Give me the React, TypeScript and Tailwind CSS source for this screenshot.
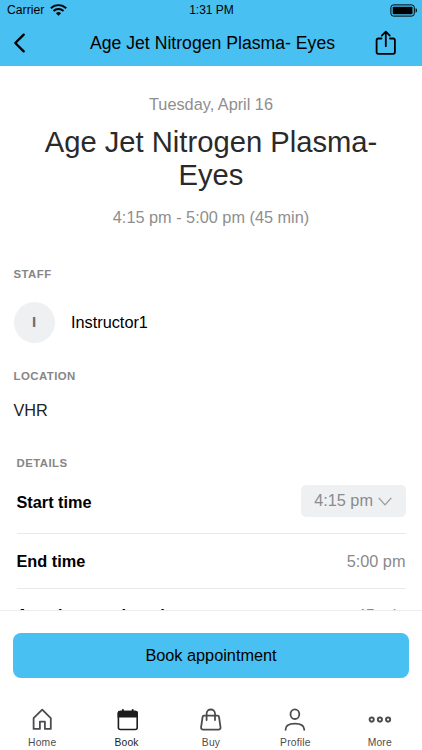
import React from 'react';

interface DetailRowProps {
  label: string;
  value: string;
  className?: string;
}

const DetailRow: React.FC<DetailRowProps> = ({ label, value, className = 'h-[55px]' }) => (
  <div className={`flex shrink-0 items-center justify-between border-b border-[#e9e9e9] text-[16.3px] ${className}`}>
    <span className="font-bold text-black">{label}</span>
    <span className="text-[#8a8a8a]">{value}</span>
  </div>
);

const SectionTitle: React.FC<{ children: React.ReactNode }> = ({ children }) => (
  <h2 className="text-[11.4px] leading-4 font-bold tracking-[0.45px] text-[#868686]">{children}</h2>
);

const StatusBar = () => (
  <div className="flex h-[19px] items-center justify-between pt-px pl-[7px] pr-1 text-[12px] leading-[18px]">
    <div className="flex w-[70px] items-center gap-[6px]">
      <span className="text-[12.2px]">Carrier</span>
      <svg width="17" height="12" viewBox="0 0 17 12" fill="none" stroke="black" strokeWidth="1.9">
        <path d="M0.8 4.3a11 11 0 0 1 15.4 0" />
        <path d="M3.5 7a7.2 7.2 0 0 1 10 0" />
        <path d="M8.5 11.8 5.9 9.2a3.8 3.8 0 0 1 5.2 0Z" fill="black" stroke="none" />
      </svg>
    </div>
    <span className="-ml-0.5">1:31 PM</span>
    <div className="flex w-[70px] justify-end">
      <svg width="28" height="13" viewBox="0 0 28 13">
        <rect x="0.9" y="0.9" width="23.4" height="11.2" rx="2.6" fill="none" stroke="black" strokeWidth="1" />
        <rect x="2.7" y="2.7" width="19.8" height="7.6" rx="0.8" />
        <path d="M25.6 4.3c1.9.6 1.9 3.8 0 4.4z" />
      </svg>
    </div>
  </div>
);

const HomeIcon = () => (
  <svg width="24" height="26" viewBox="0 0 24 26" fill="none" stroke="#4c4c50" strokeWidth="1.8" strokeLinejoin="round">
    <path d="M3.6 11.2 12.2 2.7l8.6 8.5v10.7h-5.9v-7.3H9.9v7.3H3.6z" />
  </svg>
);

const BookIcon = () => (
  <svg width="24" height="26" viewBox="0 0 24 26" fill="none" stroke="#1d1d20" strokeWidth="1.6">
    <rect x="3.4" y="4.6" width="18.8" height="17.9" rx="2" />
    <path d="M3.4 9.8V6.1a1.5 1.5 0 0 1 1.5-1.5h15.8a1.5 1.5 0 0 1 1.5 1.5v3.7z" fill="#1d1d20" />
    <path d="M7.9 3v2M17.7 3v2" strokeWidth="2" strokeLinecap="round" />
  </svg>
);

const BuyIcon = () => (
  <svg width="24" height="26" viewBox="0 0 24 26" fill="none" stroke="#4c4c50" strokeWidth="1.8" strokeLinecap="round">
    <path d="M5 8.6h13.6c.8 0 1.3.5 1.4 1.2l1.5 10.3c.2 1.5-.6 2.5-2 2.5H4.1c-1.4 0-2.2-1-2-2.5L3.6 9.8c.1-.7.6-1.2 1.4-1.2z" />
    <path d="M7.6 13V6.7a4.2 4.2 0 0 1 8.4 0V13" />
  </svg>
);

const ProfileIcon = () => (
  <svg width="24" height="26" viewBox="0 0 24 26" fill="none" stroke="#4c4c50" strokeWidth="1.8" strokeLinecap="round">
    <ellipse cx="11.9" cy="7.2" rx="4.4" ry="4.8" />
    <path d="M2.6 22.8v-.5c0-3.4 3-5.7 9.3-5.7s9.3 2.3 9.3 5.7v.5" />
  </svg>
);

const MoreIcon = () => (
  <svg width="24" height="26" viewBox="0 0 24 26" fill="none" stroke="#4c4c50" strokeWidth="1.9">
    <circle cx="3.7" cy="12.6" r="2.1" />
    <circle cx="11.9" cy="12.6" r="2.1" />
    <circle cx="20.1" cy="12.6" r="2.1" />
  </svg>
);

const tabs = [
  { label: 'Home', icon: <HomeIcon /> },
  { label: 'Book', icon: <BookIcon />, active: true },
  { label: 'Buy', icon: <BuyIcon /> },
  { label: 'Profile', icon: <ProfileIcon /> },
  { label: 'More', icon: <MoreIcon /> },
];

const App: React.FC = () => {
  return (
    <div className="flex h-[750px] w-[422px] flex-col overflow-hidden bg-white font-['Liberation_Sans',Arial,sans-serif] text-black">
      <header className="h-[66px] shrink-0 bg-[#49c0f2]">
        <StatusBar />
        <div className="flex h-[47px] items-center justify-between pl-3 pr-[25px]">
          <button className="w-[37px]">
            <svg width="16" height="22" viewBox="0 0 16 22" fill="none" stroke="black" strokeWidth="2.4" strokeLinecap="round" strokeLinejoin="round">
              <path d="M11.7 2.7 3.3 11l8.4 8.3" />
            </svg>
          </button>
          <h1 className="pt-px pl-px text-[17.6px] tracking-[0.02px] whitespace-nowrap">Age Jet Nitrogen Plasma- Eyes</h1>
          <button>
            <svg width="22" height="26" viewBox="0 0 22 26" fill="none" stroke="black" strokeWidth="1.8" strokeLinecap="round" strokeLinejoin="round">
              <path d="M6.5 8.5H3.3A1.7 1.7 0 0 0 1.6 10.2v11.9a1.7 1.7 0 0 0 1.7 1.7h14.9a1.7 1.7 0 0 0 1.7-1.7V10.2a1.7 1.7 0 0 0-1.7-1.7H15" />
              <path d="M10.8 16.2V2M6.8 5.6 10.8 1.7l4 3.9" />
            </svg>
          </button>
        </div>
      </header>

      <main className="flex h-[544px] shrink-0 flex-col overflow-hidden">
        <section className="flex flex-col items-center pt-7 text-center">
          <p className="text-[16.3px] leading-5 text-[#8e8e8e]">Tuesday, April 16</p>
          <p className="mt-3 w-[350px] text-[29.2px] leading-[33px] text-[#2a2a2a]">Age Jet Nitrogen Plasma- Eyes</p>
          <p className="mt-[15px] text-[16.3px] leading-5 text-[#8e8e8e]">4:15 pm - 5:00 pm (45 min)</p>
        </section>

        <section className="mt-[39px] px-[13.5px]">
          <SectionTitle>STAFF</SectionTitle>
          <div className="mt-5 flex items-center gap-[16.5px]">
            <div className="flex size-[41px] items-center justify-center rounded-full bg-[#eff0f2] text-[15px] font-bold text-[#6d6e72]">
              I
            </div>
            <span className="text-[16.3px]">Instructor1</span>
          </div>
        </section>

        <section className="mt-[25px] px-[13.5px]">
          <SectionTitle>LOCATION</SectionTitle>
          <p className="mt-4 text-[16.3px] leading-5 text-[#222]">VHR</p>
        </section>

        <section className="mt-[35px] px-[16.5px]">
          <SectionTitle>DETAILS</SectionTitle>
          <div className="flex h-[63px] items-center justify-between border-b border-[#e9e9e9] text-[16.3px]">
            <span className="font-bold">Start time</span>
            <button className="mb-[3px] flex h-8 items-center gap-[5px] rounded-[5px] bg-[#eff0f2] px-[13.5px] text-[#8a8b8d]">
              4:15 pm
              <svg className="mt-[2px]" width="14" height="9" viewBox="0 0 14 9" fill="none" stroke="#98999b" strokeWidth="1.3">
                <path d="M0.7 0.9 7 7.9l6.3-7" />
              </svg>
            </button>
          </div>
          <DetailRow label="End time" value="5:00 pm" />
          <DetailRow label="Appointment length" value="45 min" className="h-[54px]" />
        </section>
      </main>

      <footer className="flex-1 border-t border-[#ececec] bg-white">
        <div className="px-[13px] pt-[22px]">
          <button className="h-[45px] w-full rounded-lg bg-[#49c0f2] text-[16.3px]">Book appointment</button>
        </div>
        <nav className="mt-[29px] grid grid-cols-5">
          {tabs.map((tab) => (
            <button key={tab.label} className={`flex flex-col items-center ${tab.active ? 'text-[#1d1d20]' : 'text-[#4c4c50]'}`}>
              {tab.icon}
              <span className="mt-1 text-[10.3px] leading-3 tracking-[0.2px]">{tab.label}</span>
            </button>
          ))}
        </nav>
      </footer>
    </div>
  );
};

export default App;
